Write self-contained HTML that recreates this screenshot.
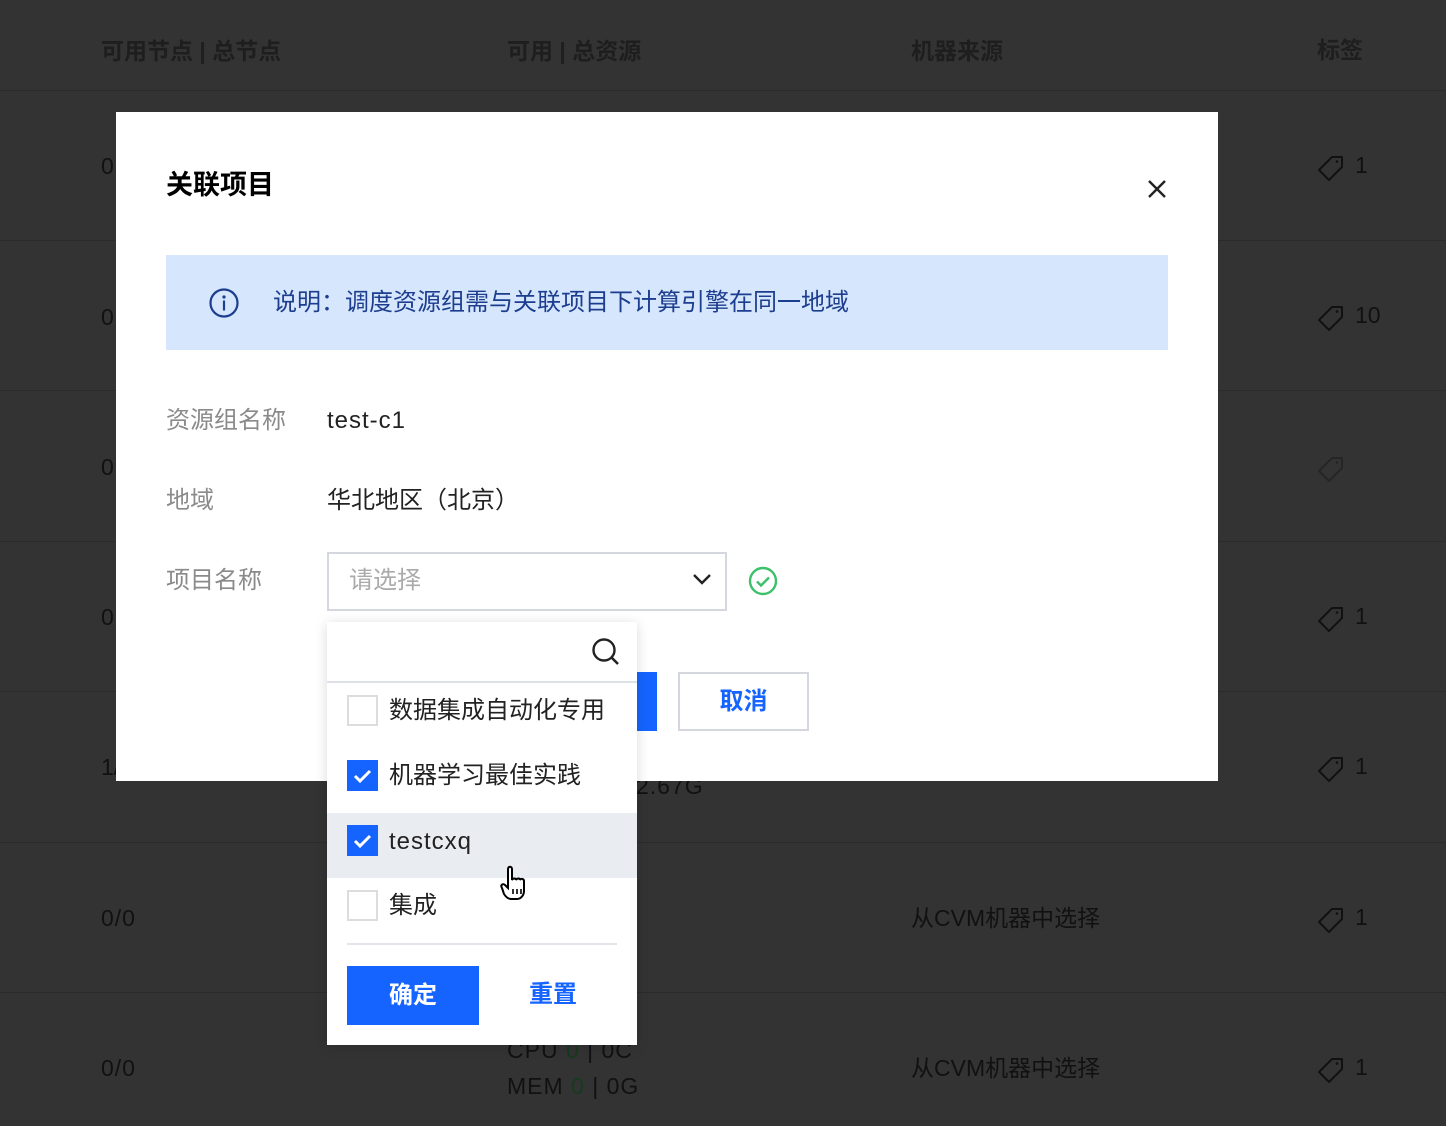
<!DOCTYPE html>
<html><head><meta charset="utf-8"><style>
*{margin:0;padding:0;box-sizing:border-box}
body{width:1446px;height:1126px;background:#333;position:relative;overflow:hidden;font-family:"Liberation Sans","Noto Sans CJK SC",sans-serif;color:#1a1a1a}
.a{position:absolute;white-space:nowrap}
.bg{font-size:23px;color:#111;line-height:30px}
.hd{color:#1e1e1e;font-weight:bold}
.ln{position:absolute;left:0;width:1446px;height:1px;background:#2b2b2b}
.tag{position:absolute;width:28px;height:28px}
.modal{position:absolute;left:116px;top:112px;width:1102px;height:669px;background:#fff}
.dd{position:absolute;left:327px;top:622px;width:310px;height:423px;background:#fff;box-shadow:0 2px 12px rgba(0,0,0,.15)}
.cb{position:absolute;left:20px;width:31px;height:31px;border:2px solid #dcdcdc;background:#fff}
.cb.on{background:#1664ff;border-color:#1664ff}
.it{position:absolute;left:62px;font-size:24px;color:#222;line-height:30px}
</style></head><body>
<div class="ln" style="top:90px"></div>
<div class="ln" style="top:240px"></div>
<div class="ln" style="top:390px"></div>
<div class="ln" style="top:541px"></div>
<div class="ln" style="top:691px"></div>
<div class="ln" style="top:842px"></div>
<div class="ln" style="top:992px"></div>
<div class="a bg hd" style="left:101px;top:36px">可用节点 | 总节点</div>
<div class="a bg hd" style="left:507px;top:36px">可用 | 总资源</div>
<div class="a bg hd" style="left:911px;top:36px">机器来源</div>
<div class="a bg hd" style="left:1317px;top:35px">标签</div>
<div class="a bg" style="left:101px;top:151px">0</div>
<div class="a bg" style="left:101px;top:302px">0</div>
<div class="a bg" style="left:101px;top:452px">0</div>
<div class="a bg" style="left:101px;top:602px">0</div>
<div class="a bg" style="left:101px;top:752px">1/</div>
<div class="a bg" style="left:636px;top:771px;letter-spacing:1px">2.67G</div>
<div class="a bg" style="left:101px;top:903px;letter-spacing:1px">0/0</div>
<div class="a bg" style="left:911px;top:903px">从CVM机器中选择</div>
<div class="a bg" style="left:101px;top:1053px;letter-spacing:1px">0/0</div>
<div class="a bg" style="left:911px;top:1053px">从CVM机器中选择</div>
<div class="a bg" style="left:507px;top:1035px;letter-spacing:1px">CPU <span style="color:#163a1e">0</span> | 0C</div>
<div class="a bg" style="left:507px;top:1071px;letter-spacing:1px">MEM <span style="color:#163a1e">0</span> | 0G</div>
<svg width="0" height="0" style="position:absolute"><defs><symbol id="tg" viewBox="0 0 28 28"><path d="M14 3h10v10L11 26 1 16Z" fill="none" stroke="#111" stroke-width="2" stroke-linejoin="round" transform="translate(1,0)"/><circle cx="20" cy="7.5" r="1.3" fill="#111"/></symbol></defs></svg>
<svg class="tag" style="left:1317px;top:154px"><use href="#tg"/></svg><div class="a bg" style="left:1355px;top:150px">1</div>
<svg class="tag" style="left:1317px;top:304px"><use href="#tg"/></svg><div class="a bg" style="left:1355px;top:300px">10</div>
<svg class="tag" style="left:1317px;top:455px;opacity:.4"><use href="#tg"/></svg>
<svg class="tag" style="left:1317px;top:605px"><use href="#tg"/></svg><div class="a bg" style="left:1355px;top:601px">1</div>
<svg class="tag" style="left:1317px;top:755px"><use href="#tg"/></svg><div class="a bg" style="left:1355px;top:751px">1</div>
<svg class="tag" style="left:1317px;top:906px"><use href="#tg"/></svg><div class="a bg" style="left:1355px;top:902px">1</div>
<svg class="tag" style="left:1317px;top:1056px"><use href="#tg"/></svg><div class="a bg" style="left:1355px;top:1052px">1</div>

<div class="modal">
<div class="a" style="left:50px;top:55px;font-size:27px;font-weight:bold;color:#000;line-height:36px">关联项目</div>
<svg class="a" style="left:1030px;top:66px" width="22" height="22"><path d="M3 3L19 19M19 3L3 19" stroke="#222" stroke-width="2.4"/></svg>
<div class="a" style="left:50px;top:143px;width:1002px;height:95px;background:#d5e6fd"></div>
<svg class="a" style="left:92px;top:175px" width="32" height="32"><circle cx="16" cy="16" r="13.5" fill="none" stroke="#1d3d8f" stroke-width="2.2"/><circle cx="16" cy="10" r="1.6" fill="#1d3d8f"/><rect x="14.9" y="13.5" width="2.2" height="10" fill="#1d3d8f"/></svg>
<div class="a" style="left:157px;top:176px;font-size:24px;color:#1d3d8f;line-height:30px">说明：调度资源组需与关联项目下计算引擎在同一地域</div>
<div class="a" style="left:50px;top:294px;font-size:24px;color:#8a8a8a;line-height:30px">资源组名称</div>
<div class="a" style="left:211px;top:294px;font-size:24px;color:#222;line-height:30px;letter-spacing:1px">test-c1</div>
<div class="a" style="left:50px;top:374px;font-size:24px;color:#8a8a8a;line-height:30px">地域</div>
<div class="a" style="left:211px;top:374px;font-size:24px;color:#222;line-height:30px">华北地区（北京）</div>
<div class="a" style="left:50px;top:454px;font-size:24px;color:#8a8a8a;line-height:30px">项目名称</div>
<div class="a" style="left:211px;top:440px;width:400px;height:59px;border:2px solid #d4d7dd"></div>
<div class="a" style="left:233px;top:454px;font-size:24px;color:#aaa;line-height:30px">请选择</div>
<svg class="a" style="left:576px;top:460px" width="20" height="14"><path d="M2 3l8 8 8-8" fill="none" stroke="#222" stroke-width="2.4"/></svg>
<svg class="a" style="left:632px;top:454px" width="30" height="30"><circle cx="15" cy="15" r="13" fill="none" stroke="#3cc06a" stroke-width="2.4"/><path d="M9 15.5l4 4 8-8" fill="none" stroke="#3cc06a" stroke-width="2.4"/></svg>
<div class="a" style="left:400px;top:560px;width:141px;height:59px;background:#1664ff"></div>
<div class="a" style="left:562px;top:560px;width:131px;height:59px;border:2px solid #d4d7dd;color:#1664ff;font-size:24px;line-height:55px;text-align:center;font-weight:bold">取消</div>
</div>

<div class="dd">
<svg class="a" style="left:263px;top:14px" width="32" height="32"><circle cx="14" cy="14" r="10.5" fill="none" stroke="#222" stroke-width="2.4"/><path d="M22 22l6 6" stroke="#222" stroke-width="2.6"/></svg>
<div class="a" style="left:0;top:59px;width:310px;height:2px;background:#dde0e6"></div>
<div class="cb" style="top:73px"></div><div class="it" style="top:74px">数据集成自动化专用</div>
<div class="cb on" style="top:138px"><svg width="27" height="27" style="position:absolute;left:0;top:0"><path d="M6 14l5 5 10-10" fill="none" stroke="#fff" stroke-width="3"/></svg></div><div class="it" style="top:139px">机器学习最佳实践</div>
<div class="a" style="left:0;top:191px;width:310px;height:65px;background:#e9ecf1"></div>
<div class="cb on" style="top:203px"><svg width="27" height="27" style="position:absolute;left:0;top:0"><path d="M6 14l5 5 10-10" fill="none" stroke="#fff" stroke-width="3"/></svg></div><div class="it" style="top:205px;letter-spacing:1px">testcxq</div>
<div class="cb" style="top:268px"></div><div class="it" style="top:269px">集成</div>
<svg class="a" style="left:172px;top:243px" width="36" height="38"><path d="M9 4c0-3 4-3 4 0v11c1-2 4-2 4 0 1-2 4-2 4 0 1-2 4-1 4 1v10c0 4-3 8-7 8h-6c-3 0-5-2-7-5L3 23c-2-3 1-5 3-3l3 3Z" fill="#fff" stroke="#000" stroke-width="2"/><path d="M14 24v5M18 24v5M22 24v5" stroke="#000" stroke-width="1.6"/></svg>
<div class="a" style="left:20px;top:321px;width:270px;height:2px;background:#e3e5ea"></div>
<div class="a" style="left:20px;top:344px;width:132px;height:59px;background:#1664ff;color:#fff;font-size:24px;line-height:59px;text-align:center;font-weight:bold">确定</div>
<div class="a" style="left:202px;top:358px;font-size:24px;color:#1664ff;line-height:30px;font-weight:bold">重置</div>
</div>
</body></html>
